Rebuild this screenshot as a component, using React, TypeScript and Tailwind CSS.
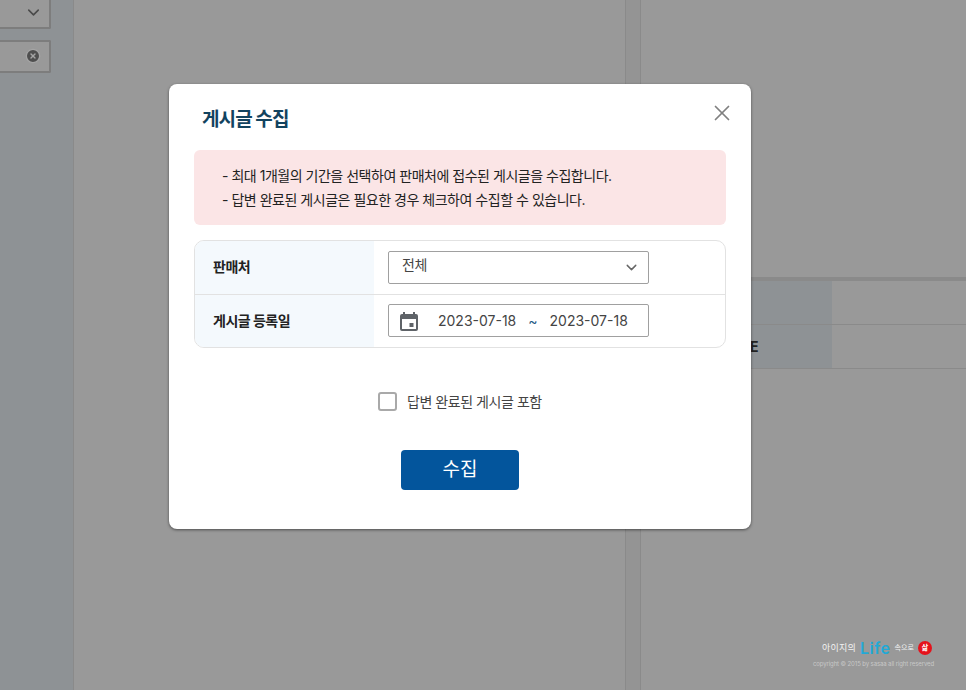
import { X, ChevronDown, CircleX } from 'lucide-react'

function CalendarIcon() {
  return (
    <svg width="20" height="20" viewBox="0 0 20 20" className="text-[#5f6368]">
      <path
        fill="currentColor"
        fillRule="evenodd"
        d="M4 1h2v2h8V1h2v2h1a2 2 0 0 1 2 2v13a2 2 0 0 1-2 2H3a2 2 0 0 1-2-2V5a2 2 0 0 1 2-2h1V1ZM3 8v10h14V8H3Z"
      />
      <rect x="10.5" y="12" width="4" height="4" fill="currentColor" />
    </svg>
  )
}

function Backdrop() {
  return (
    <div className="flex h-[690px] w-full overflow-hidden bg-[#999999]">
      <div className="flex w-[74px] shrink-0 flex-col gap-[11px] border-r border-[#8a8a8a] bg-[#8e9295]">
        <div className="flex h-[29px] w-[51px] items-center justify-end rounded-br-[2px] border-r-2 border-b-2 border-[#7d7d7d] bg-[#999999] pr-[6px]">
          <ChevronDown size={19} strokeWidth={2} className="-mt-[3px] text-[#4a4a4a]" />
        </div>
        <div className="flex h-[33px] w-[51px] items-center justify-end rounded-r-[2px] border-y-2 border-r-2 border-[#7d7d7d] bg-[#999999] pr-[8px]">
          <CircleX size={16} strokeWidth={2} className="-mt-[1px] fill-[#4f4f4f] text-[#a5a5a5]" />
        </div>
      </div>
      <div className="w-[551px] shrink-0 bg-[#999999]" />
      <div className="w-[16px] shrink-0 border-x border-[#8a8a8a] bg-[#949494]" />
      <div className="flex flex-1 flex-col pt-[277px]">
        <div className="h-[4px] bg-[#8a8a8a]" />
        <div className="h-[44px] border-b border-[#8a8a8a]">
          <div className="h-full w-[191px] bg-[#8e9295]" />
        </div>
        <div className="h-[44px] border-b border-[#8a8a8a]">
          <div className="flex h-full w-[191px] items-center bg-[#8e9295] pl-[109px] text-[14px] font-bold text-[#222222]">E</div>
        </div>
      </div>
    </div>
  )
}

export default function App() {
  return (
    <div className="relative h-[690px] w-[966px] overflow-hidden font-['Inter','Noto_Sans_CJK_KR',sans-serif] text-[#333333]">
      <Backdrop />

      {/* modal */}
      <div className="absolute top-[84px] left-[169px] h-[445px] w-[582px] rounded-[8px] bg-white px-[25px] shadow-[0_1px_3px_rgba(0,0,0,0.5)]">
        <div className="flex h-[66px] items-center justify-between pt-[6px] pl-[8px]">
          <h2 className="text-[19px] font-bold tracking-[-0.9px] text-[#12435f]">게시글 수집</h2>
        </div>
        <button className="absolute top-[16px] right-[16px] text-[#808080]">
          <X size={26} strokeWidth={1.6} />
        </button>

        <div className="flex h-[75px] flex-col justify-center gap-[4px] rounded-[6px] bg-[#fbe5e6] pl-[28px] text-[14px] leading-[20px] tracking-[-0.48px] text-[#222222]">
          <p>- 최대 1개월의 기간을 선택하여 판매처에 접수된 게시글을 수집합니다.</p>
          <p>- 답변 완료된 게시글은 필요한 경우 체크하여 수집할 수 있습니다.</p>
        </div>

        <div className="mt-[15px] overflow-hidden rounded-[10px] border border-[#e2e2e2] text-[14px]">
          <div className="flex h-[54px] border-b border-[#e2e2e2]">
            <div className="flex w-[179px] items-center bg-[#f4f9fd] pl-[18px] font-bold tracking-[-0.5px] text-[#222222]">
              <span className="-mt-[3px]">판매처</span>
            </div>
            <div className="flex items-center pl-[14px]">
              <div className="flex h-[33px] w-[261px] items-center justify-between rounded-[2px] border border-[#a0a0a0] pr-[8px] pl-[13px] text-[#444444]">
                <span className="-mt-[7px] tracking-[-0.5px]">전체</span>
                <ChevronDown size={17} strokeWidth={2} className="text-[#666666]" />
              </div>
            </div>
          </div>
          <div className="flex h-[52px]">
            <div className="flex w-[179px] items-center bg-[#f4f9fd] pl-[18px] font-bold tracking-[-0.5px] text-[#222222]">
              <span className="-mt-[1px]">게시글 등록일</span>
            </div>
            <div className="flex items-center pl-[14px]">
              <div className="-mt-[1px] flex h-[33px] w-[261px] items-center rounded-[2px] border border-[#a0a0a0] pl-[10px] text-[#444444]">
                <CalendarIcon />
                <span className="ml-[19px]">2023-07-18</span>
                <span className="ml-[12px] text-[#1f5a85]">~</span>
                <span className="ml-[12px]">2023-07-18</span>
              </div>
            </div>
          </div>
        </div>

        <label className="mt-[43px] flex items-center gap-[10px] pl-[184px] text-[14px] tracking-[-0.45px] text-[#444444]">
          <span className="h-[19px] w-[19px] rounded-[3px] border-2 border-[#a9a9a9] bg-white" />
          답변 완료된 게시글 포함
        </label>

        <div className="mt-[38px] flex justify-center">
          <button className="h-[40px] w-[118px] rounded-[4px] bg-[#03559c] text-[19px] text-white">수집</button>
        </div>
      </div>

      {/* watermark */}
      <div className="absolute top-[638px] left-[813px] flex w-[121px] flex-col items-center">
        <div className="flex items-center gap-[4px] pl-[7px] whitespace-nowrap">
          <span className="text-[9px] tracking-[0.2px] text-[#f2f2f2]">아이지의</span>
          <span className="text-[16px] leading-[20px] font-semibold tracking-[0.5px] text-[#22a9d6]">Life</span>
          <span className="text-[7px] text-[#f2f2f2]">속으로</span>
          <span className="flex h-[14px] w-[14px] items-center justify-center rounded-full bg-[#e5121b] text-[7px] font-bold text-white">삶</span>
        </div>
        <span className="mt-[2px] text-[6px] leading-[8px] tracking-[-0.1px] whitespace-nowrap text-[#c8c8c8]">copyright © 2015 by sasaa all right reserved</span>
      </div>
    </div>
  )
}
